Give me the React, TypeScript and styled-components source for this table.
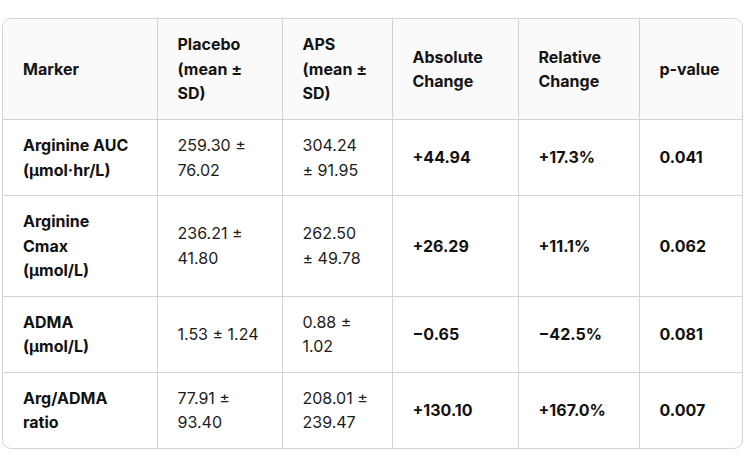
import React from 'react';
import styled, { createGlobalStyle } from 'styled-components';

const GlobalStyle = createGlobalStyle`
  html, body {
    margin: 0;
    padding: 0;
    background: #ffffff;
  }
  body {
    font-family: Inter, "Noto Sans", "Liberation Sans", sans-serif;
    color: #141414;
  }
`;

const Page = styled.div`
  padding: 18px 6px 20px 2px;
`;

const TableFrame = styled.div`
  border: 1px solid #d3d3d3;
  border-radius: 9px;
  overflow: hidden;
`;

const Table = styled.table`
  width: 100%;
  border-collapse: collapse;
  table-layout: fixed;
  font-size: 16px;
  line-height: 24.5px;
`;

const HeadCell = styled.th`
  background: #fafafa;
  font-weight: 700;
  text-align: left;
  vertical-align: middle;
  padding: 13.25px 22px 13.25px 20px;
  border-left: 1px solid #d3d3d3;
  border-bottom: 1px solid #d3d3d3;
  &:first-child {
    border-left: none;
  }
`;

const Cell = styled.td<{ $strong?: boolean }>`
  font-weight: ${(p) => (p.$strong ? 700 : 400)};
  color: ${(p) => (p.$strong ? '#111111' : '#1c1c1c')};
  vertical-align: middle;
  padding: 13px 22px 13px 20px;
  border-left: 1px solid #d3d3d3;
  border-bottom: 1px solid #d3d3d3;
  &:first-child {
    border-left: none;
    padding-right: 24px;
  }
`;

const Row = styled.tr`
  &:last-child td {
    border-bottom: none;
  }
`;

const columns = [
  { label: 'Marker', width: 154 },
  { label: 'Placebo (mean ± SD)', width: 125 },
  { label: 'APS (mean ± SD)', width: 110 },
  { label: 'Absolute Change', width: 126 },
  { label: 'Relative Change', width: 121 },
  { label: 'p-value', width: 104 },
];

const rows = [
  ['Arginine AUC (μmol·hr/L)', '259.30 ± 76.02', '304.24 ± 91.95', '+44.94', '+17.3%', '0.041'],
  ['Arginine Cmax (μmol/L)', '236.21 ± 41.80', '262.50 ± 49.78', '+26.29', '+11.1%', '0.062'],
  ['ADMA (μmol/L)', '1.53 ± 1.24', '0.88 ± 1.02', '−0.65', '−42.5%', '0.081'],
  ['Arg/ADMA ratio', '77.91 ± 93.40', '208.01 ± 239.47', '+130.10', '+167.0%', '0.007'],
];

export default function App() {
  return (
    <Page>
      <GlobalStyle />
      <TableFrame>
        <Table>
          <colgroup>
            {columns.map((c) => (
              <col key={c.label} style={{ width: c.width }} />
            ))}
          </colgroup>
          <thead>
            <tr>
              {columns.map((c) => (
                <HeadCell key={c.label}>{c.label}</HeadCell>
              ))}
            </tr>
          </thead>
          <tbody>
            {rows.map((r) => (
              <Row key={r[0]}>
                {r.map((v, i) => (
                  <Cell key={i} $strong={i === 0 || i > 2}>
                    {v}
                  </Cell>
                ))}
              </Row>
            ))}
          </tbody>
        </Table>
      </TableFrame>
    </Page>
  );
}
